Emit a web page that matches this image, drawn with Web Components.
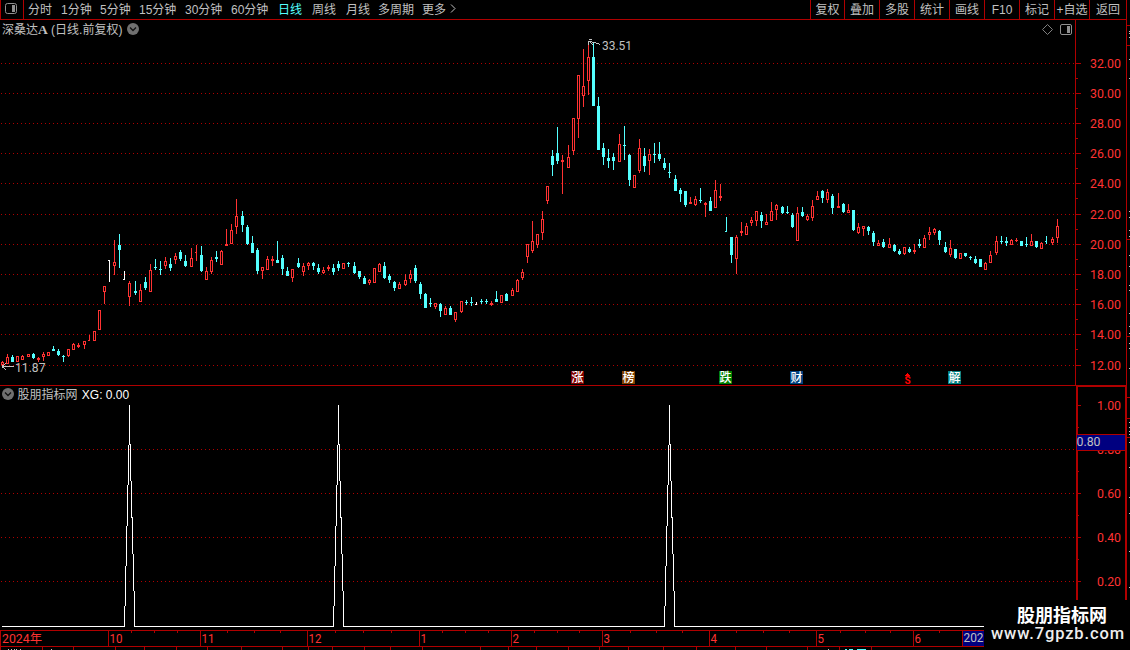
<!DOCTYPE html>
<html lang="zh-CN">
<head>
<meta charset="utf-8">
<title>深桑达A</title>
<style>
    html, body { margin: 0; background: #000; }
    body {
        width: 1130px;
        height: 650px;
        overflow: hidden;
        font-family: "Liberation Sans", "Noto Sans CJK SC", sans-serif;
        font-size: 12px;
        color: #c0c0c0; }
</style>
</head>
<body>
<stock-app>
    <tool-bar slot="bar">
        <tool-item w="33">分时</tool-item>
        <tool-item w="39">1分钟</tool-item>
        <tool-item w="39">5分钟</tool-item>
        <tool-item w="46">15分钟</tool-item>
        <tool-item w="46">30分钟</tool-item>
        <tool-item w="47">60分钟</tool-item>
        <tool-item w="34" active>日线</tool-item>
        <tool-item w="34">周线</tool-item>
        <tool-item w="32">月线</tool-item>
        <tool-item w="44">多周期</tool-item>
        <tool-item w="40" more>更多</tool-item>
        <tool-item slot="end" w="34" boxed>复权</tool-item>
        <tool-item slot="end" w="35" boxed>叠加</tool-item>
        <tool-item slot="end" w="35" boxed>多股</tool-item>
        <tool-item slot="end" w="35" boxed>统计</tool-item>
        <tool-item slot="end" w="35" boxed>画线</tool-item>
        <tool-item slot="end" w="35" boxed>F10</tool-item>
        <tool-item slot="end" w="35" boxed>标记</tool-item>
        <tool-item slot="end" w="35" boxed>+自选</tool-item>
        <tool-item slot="end" w="37" boxed>返回</tool-item>
    </tool-bar>
    <chart-panel slot="price">
        <panel-title slot="title">深桑达<b>A</b> (日线.前复权)</panel-title>
        <candle-chart></candle-chart>
        <value-axis slot="axis" kind="price"></value-axis>
    </chart-panel>
    <chart-panel slot="indicator">
        <panel-title slot="title" before>股朋指标网 <span>XG: 0.00</span></panel-title>
        <signal-chart></signal-chart>
        <value-axis slot="axis" kind="signal"></value-axis>
    </chart-panel>
    <date-axis slot="dates"></date-axis>
    <side-strip slot="side"></side-strip>
    <site-mark slot="mark">
        <span>股朋指标网</span>
    </site-mark>
</stock-app>

<script>
    const RED = '#b00000';
    const LABEL = '#ff3232';
    const CYAN = '#54ffff';
    const GREY = '#c0c0c0';

    const rect = (x, y, w, h, fill) => `<rect x="${x}" y="${y}" width="${w}" height="${h}" fill="${fill}"/>`;
    const label = (s, x, y, w, fill, size = 13.5) =>
        `<text x="${x}" y="${y}" fill="${fill}" font-size="${size}" textLength="${w}" lengthAdjust="spacingAndGlyphs">${s}</text>`;
    // 1px dots, every 4px
    const dots = (y, end) =>
        `<path d="M1 ${y + .5}H${end}" stroke="#b00000" stroke-width="1" stroke-dasharray="1 3"/>`;
    const svgStyle = `<style>
        :host { display: block; }
        svg { display: block; shape-rendering: crispEdges; }
        text { font-family: Roboto, "Noto Sans CJK SC", sans-serif; }
    </style>`;

    class BaseElement extends HTMLElement {
        constructor() {
            super();
            this.attachShadow({mode: 'open'});
        }
        connectedCallback() {
            this.shadowRoot.innerHTML = this.render();
        }
    }

    class StockApp extends BaseElement {
        render() {
            return `<style>
                :host {
                    display: grid;
                    position: relative;
                    width: 1130px;
                    height: 650px;
                    grid-template-columns: 1127px 3px;
                    grid-template-rows: 20px 365px 245px 20px;
                    overflow: hidden; }
                .side { grid-column: 2; grid-row: 1 / 5; }
                .main { grid-column: 1; }
                .mark { position: absolute; right: 0; bottom: 0; }
            </style>
            <div class="main"><slot name="bar"></slot></div>
            <div class="main"><slot name="price"></slot></div>
            <div class="main"><slot name="indicator"></slot></div>
            <div class="main"><slot name="dates"></slot></div>
            <div class="side"><slot name="side"></slot></div>
            <div class="mark"><slot name="mark"></slot></div>`;
        }
    }
    customElements.define('stock-app', StockApp);

    class ToolBar extends BaseElement {
        render() {
            return `<style>
                :host {
                    display: flex;
                    box-sizing: border-box;
                    height: 20px;
                    border-bottom: 1px solid ${RED};
                    border-left: 1px solid ${RED};
                    border-right: 1px solid ${RED}; }
                .logo {
                    width: 22px;
                    margin-right: 4px;
                    border-right: 1px solid ${RED}; }
                .end { display: flex; margin-left: auto; }
                svg { display: block; }
            </style>
            <div class="logo"><svg width="22" height="19">
                <rect x="4.5" y="3.5" width="11" height="10" rx="2" fill="none" stroke="#909090"/>
                <rect x="11" y="5" width="3" height="7" fill="#909090"/>
            </svg></div>
            <slot></slot>
            <div class="end"><slot name="end"></slot></div>`;
        }
    }
    customElements.define('tool-bar', ToolBar);

    class ToolItem extends BaseElement {
        render() {
            return `<style>
                :host {
                    display: flex;
                    box-sizing: border-box;
                    flex: none;
                    width: ${this.getAttribute('w')}px;
                    height: 19px;
                    line-height: 20px;
                    white-space: nowrap; }
                :host([active]) { color: ${CYAN}; }
                :host([boxed]) {
                    justify-content: center;
                    border-left: 1px solid ${RED}; }
                svg { margin: 4px 0 0 4px; }
            </style>
            <slot></slot>${this.hasAttribute('more')
                ? '<svg width="7" height="9"><path d="M1 .5L5 4.5L1 8.5" fill="none" stroke="#c0c0c0"/></svg>' : ''}`;
        }
    }
    customElements.define('tool-item', ToolItem);

    class ChartPanel extends BaseElement {
        render() {
            return `<style>
                :host { display: flex; position: relative; }
                .title { position: absolute; top: 0; left: 0; }
            </style>
            <slot></slot>
            <slot name="axis"></slot>
            <div class="title"><slot name="title"></slot></div>`;
        }
    }
    customElements.define('chart-panel', ChartPanel);

    class PanelTitle extends BaseElement {
        render() {
            return `<style>
                :host {
                    display: flex;
                    align-items: center;
                    gap: 5px;
                    height: 18px;
                    padding-left: 2px;
                    line-height: 18px;
                    white-space: pre; }
                :host([before]) {
                    flex-direction: row-reverse;
                    gap: 3.5px; }
                ::slotted(b) { font: bold 13.5px "Liberation Serif", serif; }
                ::slotted(span) { margin-left: 1px; color: #fff; }
                svg { display: block; }
                div { padding-top: 1px; }
            </style>
            <div><slot></slot></div>
            <svg width="12" height="12">
                <circle cx="6" cy="6" r="6" fill="#707070"/>
                <path d="M3 4.5L6 7.5L9 4.5" fill="none" stroke="#111" stroke-width="1.3"/>
            </svg>`;
        }
    }
    customElements.define('panel-title', PanelTitle);

    // x, high, body top, body bottom, low, kind
    // r: rise (hollow), c: fall (solid), capitals: one-sided tick only, W: white
    const CANDLES = `
        2 361 362 365 365 r|7 354 357 364 364 r|12 355 357 362 362 c|17 356 356 362 362 r|22 355 356 360 360 r
        28 354 354 357 357 r|33 353 354 358 359 c|38 357 358 360 362 r|43 352 354 357 361 r|48 352 352 356 356 r
        53 346 349 351 351 c|58 349 351 355 356 c|63 355 356 357 362 c|68 349 349 356 357 r|73 343 344 350 350 r
        78 343 345 347 348 r|84 341 341 345 349 r|89 335 340 341 341 R|94 331 331 341 341 r|99 310 310 330 330 r
        104 286 286 292 304 r|109 260 260 261 282 W|114 240 262 266 275 r|119 234 245 250 268 c|124 271 279 280 280 W
        129 281 283 297 306 r|135 281 291 293 295 c|140 284 290 302 302 r|145 277 282 288 290 c|150 264 270 292 292 r
        155 259 267 268 270 c|160 261 269 270 275 c|165 257 261 266 269 r|170 258 264 268 271 c|175 253 256 260 264 r
        180 250 252 259 261 c|185 255 261 266 267 c|191 248 258 267 267 r|196 245 252 253 261 R|201 246 255 271 272 c
        206 267 271 280 280 r|211 257 260 272 274 r|216 251 257 259 262 c|221 250 251 265 265 r|226 229 244 246 246 r
        231 224 230 244 244 r|236 199 216 227 234 r|242 211 216 225 232 c|247 225 227 244 245 c|252 236 243 253 253 c
        257 248 250 271 274 c|262 267 267 271 279 r|267 256 259 270 270 r|272 256 259 261 266 r|277 241 260 263 263 c
        282 255 258 269 275 c|287 267 271 276 276 c|292 269 269 278 282 r|298 258 263 267 268 c|303 263 266 272 276 r
        308 262 263 266 270 r|313 262 263 266 270 c|318 264 268 272 274 c|323 267 270 273 274 r|328 265 267 269 271 r
        333 264 268 272 275 c|338 261 264 268 271 c|343 263 263 269 269 r|348 262 263 264 267 c|354 262 266 273 274 c
        359 271 271 277 279 c|364 276 278 284 284 c|369 279 280 283 285 r|374 268 268 283 283 r|379 263 264 272 272 r
        384 262 266 278 279 c|389 274 276 280 283 c|394 281 282 288 291 c|399 282 284 289 289 r|405 274 280 285 286 r
        410 270 274 279 283 r|415 265 268 281 283 c|420 282 284 294 299 c|425 293 294 308 308 c|430 298 303 304 307 c
        435 303 303 307 309 r|440 303 304 311 317 c|445 306 308 315 315 r|450 306 308 315 315 c|455 312 312 320 322 r
        461 301 301 312 313 r|466 300 302 303 305 c|471 297 302 303 306 c|476 302 304 305 305 W|481 299 301 302 304 c
        486 299 301 302 304 c|491 301 303 305 306 r|496 291 299 302 302 c|501 295 295 303 303 r|506 293 294 301 301 c
        512 288 290 296 296 r|517 279 280 292 292 r|522 269 272 278 280 r|527 244 244 257 263 r|532 221 241 251 253 r
        537 234 234 245 248 r|542 211 219 233 240 r|547 186 186 201 204 r|552 150 156 165 176 c|557 127 153 161 164 c
        562 155 160 162 194 r|568 145 157 168 168 r|573 118 118 151 155 r|578 75 75 119 138 r|583 49 86 96 107 r
        588 43 57 81 95 r|593 42 57 106 106 c|598 97 106 150 150 c|603 143 148 157 165 c|608 149 158 161 168 c
        613 153 157 161 170 c|619 134 144 162 162 r|624 126 145 146 160 c|629 154 155 180 186 c|634 175 175 188 188 r
        639 139 148 171 173 r|644 148 156 166 172 c|649 149 154 161 175 r|654 143 154 155 163 c|659 142 154 159 161 c
        664 158 163 168 170 c|669 163 172 173 178 c|675 175 179 191 191 c|680 188 190 194 202 c|685 191 191 205 207 c
        690 197 202 204 204 r|695 196 199 205 206 r|700 188 200 201 203 c|705 202 203 205 217 r|710 197 201 211 211 c
        715 180 190 208 208 r|720 184 196 198 201 r|726 217 231 232 232 C|731 237 237 255 263 c|736 235 237 259 274 r
        741 222 231 233 236 r|746 223 226 235 235 r|751 217 220 223 226 r|756 211 211 221 226 r|761 212 215 221 228 c
        766 214 222 225 225 r|771 202 211 221 221 r|776 204 205 210 220 r|782 206 207 213 214 c|787 206 212 213 214 c
        792 213 215 227 228 c|797 207 213 241 241 r|802 207 212 216 217 c|807 214 216 220 221 r|812 200 206 218 221 r
        817 191 196 200 200 r|822 190 191 198 203 c|827 189 192 200 203 r|832 194 196 208 214 c|838 193 206 208 208 r
        843 203 204 212 213 c|848 204 210 213 213 r|853 210 210 230 231 c|858 223 227 233 234 r|863 226 226 229 236 r
        868 226 227 231 235 c|873 231 233 242 246 c|878 240 243 246 246 r|883 239 242 247 248 c|889 238 244 248 248 r
        894 244 245 251 252 c|899 249 251 254 255 c|904 247 247 254 255 r|909 247 249 252 253 c|914 244 250 252 254 r
        919 239 244 246 248 c|924 235 238 248 248 r|929 227 232 235 240 r|934 228 229 233 235 r|939 230 231 240 245 c
        945 242 247 252 253 c|950 240 248 255 257 r|955 249 249 258 259 c|960 253 253 259 259 r|965 253 253 256 257 c
        970 256 257 258 260 c|975 256 259 263 264 c|980 259 259 267 267 c|985 262 263 270 270 r|990 251 255 263 263 r
        996 236 241 253 255 r|1001 236 241 242 244 c|1006 237 241 243 246 c|1011 239 240 245 245 r|1016 238 240 241 242 r
        1021 241 241 246 246 c|1026 237 244 245 247 c|1031 234 241 246 246 r|1036 241 241 247 248 c|1041 242 243 249 249 r
        1046 236 241 242 244 C|1052 237 239 243 245 r|1057 219 226 238 243 r`
        .trim().split(/\||\n/).map(row => row.trim().split(' '));

    class CandleChart extends BaseElement {
        candle([x, high, top, bottom, low, kind]) {
            [x, high, top, bottom, low] = [x, high, top, bottom, low].map(Number);
            const color = {r: LABEL, c: CYAN, w: '#fff'}[kind.toLowerCase()];
            let out = rect(x, high, 1, low - high, color);
            if (kind === kind.toUpperCase()) {
                return out + rect(x - 1, top, 1, bottom - top, color);
            }
            out += rect(x - 1, top, 3, bottom - top, color);
            if (kind === 'r' && bottom - top > 2) {
                out += rect(x, top + 1, 1, bottom - top - 2, '#000');
            }
            return out;
        }
        badge(x, s, fill) {
            return rect(x, 371, 13, 13, fill) +
                `<text x="${x + .5}" y="382" font-size="12" font-weight="500" fill="#fff">${s}</text>`;
        }
        render() {
            return `${svgStyle}<svg width="1075" height="365" viewBox="0 20 1075 365">
                ${[63, 93, 123, 153, 183, 214, 244, 274, 304, 334, 365].map(y => dots(y, 1075)).join('')}
                ${CANDLES.map(this.candle).join('')}
                <path d="M3 366.5H14M2 366.5L6 363.5M2 366.5L6 369.5" stroke="${GREY}" fill="none"/>
                ${label('11.87', 15, 372, 30.5, GREY)}
                <path d="M600 44.5L595 42.5L589 41.5M588.5 45V40.5M589 39.5H592M589 41L593 45" stroke="${GREY}" fill="none"/>
                ${label('33.51', 602, 50, 30, GREY)}
                ${this.badge(571, '涨', '#800000')}
                ${this.badge(622, '榜', '#804000')}
                ${this.badge(719, '跌', '#008000')}
                ${this.badge(790, '财', '#004080')}
                ${this.badge(948, '解', '#008080')}
                <path d="M905 375.5L907.5 373L910 375.5Z" fill="#f00"/>
                <text x="904.5" y="384" font-size="10" font-weight="bold" fill="#f00">S</text>
                <path d="M1047.5 24.5L1052.5 29.5L1047.5 34.5L1042.5 29.5Z" stroke="#808080" fill="none" shape-rendering="auto"/>
                <rect x="1060.5" y="24.5" width="11" height="10" rx="1.5" stroke="#909090" fill="none" shape-rendering="auto"/>
                ${rect(1067, 26, 3, 7, '#909090')}
            </svg>`;
        }
    }
    customElements.define('candle-chart', CandleChart);

    class SignalChart extends BaseElement {
        render() {
            const peaks = [129, 338, 669];
            const line = peaks.map(x => `H${x - 4.5}L${x + .5} 425V405V425L${x + 6} 626.5`).join('');
            return `${svgStyle}<svg width="1075" height="245" viewBox="0 385 1075 245">
                ${rect(0, 385, 1075, 1, RED)}
                ${[449, 493, 537, 581].map(y => dots(y, 1075)).join('')}
                <path d="M2 626.5${line}H1075" stroke="#fff" fill="none"/>
            </svg>`;
        }
    }
    customElements.define('signal-chart', SignalChart);

    class ValueAxis extends BaseElement {
        price() {
            const ys = [63, 93, 123, 153, 183, 214, 244, 274, 304, 334, 365];
            return `<svg width="52" height="365" viewBox="1075 20 52 365">
                ${rect(1075, 20, 1, 365, RED)}${rect(1126, 20, 1, 365, RED)}
                ${ys.map((y, i) => rect(1076, y, 5, 1, RED) +
                    (i < 10 ? rect(1076, y + 15, 2, 1, RED) : '') +
                    label(32 - i * 2 + '.00', 1090, y + 5, 31, LABEL)).join('')}
            </svg>`;
        }
        signal() {
            return `<svg width="52" height="245" viewBox="1075 385 52 245">
                ${rect(1075, 385, 52, 1, RED)}
                ${rect(1076, 386, 51, 1, RED)}
                ${rect(1076, 386, 2, 244, RED)}${rect(1125, 386, 2, 244, RED)}
                ${['1.00', '0.80', '0.60', '0.40', '0.20'].map((s, i) =>
                    rect(1078, 405 + i * 44, 3, 1, RED) + rect(1078, 427 + i * 44, 1, 1, RED) +
                    label(s, 1097, 410 + i * 44, 24, LABEL)).join('')}
                ${rect(1076, 434, 50, 17, RED)}
                ${rect(1077, 435, 48, 15, '#000080')}
                ${label('0.80', 1076.5, 446, 24, GREY)}
            </svg>`;
        }
        render() {
            return svgStyle + this[this.getAttribute('kind')]();
        }
    }
    customElements.define('value-axis', ValueAxis);

    class DateAxis extends BaseElement {
        render() {
            const months = [[108, '10'], [200, '11'], [307, '12'], [419, '1'], [511, '2'],
                [602, '3'], [709, '4'], [816, '5'], [913, '6']];
            const weeks = [131, 154, 177, 227, 254, 280, 335, 363, 391, 442, 465, 488, 534, 557, 579,
                630, 656, 682, 736, 763, 789, 840, 865, 890, 939];
            const lower = [0, 42, 73, 115, 144, 176, 207, 241, 282, 308, 332, 364, 390, 422, 480, 508, 536,
                568, 599, 628, 663, 696, 735, 766, 807, 839, 871];
            return `${svgStyle}<svg width="1127" height="20" viewBox="0 630 1127 20">
                ${rect(0, 630, 1127, 1, RED)}${rect(0, 646, 1127, 1, RED)}
                ${rect(0, 630, 1, 16, RED)}
                ${label('2024年', 2, 643, 40, LABEL, 12.5)}
                ${months.map(([x, s]) => rect(x, 631, 1, 15, RED) +
                    label(s, x + 1.5, 643, s.length * 6.5, LABEL, 12.5)).join('')}
                ${weeks.map(x => rect(x, 631, 1, 2, RED)).join('')}
                ${lower.map(x => rect(x, 647, 1, 3, RED)).join('')}
                ${rect(962, 631, 1, 15, RED)}${rect(963, 631, 60, 15, '#000080')}
                ${label('202', 963.5, 642, 20, GREY, 12.5)}
                ${[8, 11, 14, 16, 20, 51, 828].map(x => rect(x, 649, 1, 1, GREY)).join('')}
                ${rect(845, 649, 2, 1, CYAN)}${rect(849, 649, 4, 1, CYAN)}${rect(857, 649, 9, 1, CYAN)}
            </svg>`;
        }
    }
    customElements.define('date-axis', DateAxis);

    class SideStrip extends BaseElement {
        render() {
            return `${svgStyle}<svg width="3" height="650">
                ${[25, 45, 239, 336, 397, 418, 437].map(y => rect(0, y, 3, 1, RED)).join('')}
                ${[31, 33, 37, 59, 78, 211, 217, 230, 236, 255, 266, 285, 290, 313, 326, 333, 343, 348, 368,
                    422, 427, 431, 434, 442, 467, 497, 513, 551, 587].map(y => rect(2, y, 1, 1, GREY)).join('')}
            </svg>`;
        }
    }
    customElements.define('side-strip', SideStrip);

    class SiteMark extends BaseElement {
        render() {
            return `<style>
                :host {
                    display: flex;
                    flex-direction: column;
                    box-sizing: border-box;
                    width: 146px;
                    height: 50px;
                    background: #000;
                    color: #fff; }
                .name {
                    height: 22px;
                    padding: 3px 0 0 33px;
                    font: bold 18px/22px "Noto Sans CJK SC", sans-serif;
                    white-space: nowrap; }
                svg { display: block; }
                text { font: 500 16.5px Roboto, sans-serif; }
            </style>
            <div class="name"><slot></slot></div>
            <svg width="146" height="25">
                <text x="7" y="14" fill="#eee" textLength="133" lengthAdjust="spacing">www.7gpzb.com</text>
            </svg>`;
        }
    }
    customElements.define('site-mark', SiteMark);
</script>
</body>
</html>
